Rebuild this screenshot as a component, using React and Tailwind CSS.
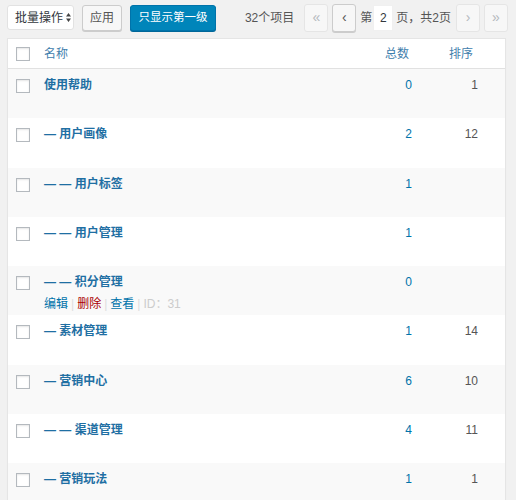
import React from 'react';

const rows = [
  { name: '使用帮助', count: '0', order: '1' },
  { name: '— 用户画像', count: '2', order: '12' },
  { name: '— — 用户标签', count: '1', order: '' },
  { name: '— — 用户管理', count: '1', order: '' },
  { name: '— — 积分管理', count: '0', order: '', actions: true },
  { name: '— 素材管理', count: '1', order: '14' },
  { name: '— 营销中心', count: '6', order: '10' },
  { name: '— — 渠道管理', count: '4', order: '11' },
  { name: '— 营销玩法', count: '1', order: '1' },
];

const Check = () => (
  <span className="block w-[14px] h-[14px] bg-white border border-[#b4b9be] shadow-[inset_0_1px_2px_rgba(0,0,0,0.1)]" />
);

const PageBtn = ({ children, disabled }) => (
  <span
    className={`flex items-center justify-center w-[24px] h-[28px] border rounded-[3px] text-[14px] ${
      disabled
        ? 'border-[#e5e5e5] bg-[#f7f7f7] text-[#b4b9be]'
        : 'border-[#cccccc] bg-[#f7f7f7] text-[#555] shadow-[0_1px_0_#ccc]'
    }`}
  >
    {children}
  </span>
);

export default function App() {
  return (
    <div
      className="min-h-[500px] bg-[#f1f1f1] text-[12px] text-[#555] overflow-hidden"
      style={{ fontFamily: '"Liberation Sans", "Noto Sans CJK SC", sans-serif' }}
    >
      {/* Toolbar */}
      <div className="flex items-center h-[38px] pl-[7px] pr-[8px] pb-[3px] whitespace-nowrap">
        <div className="shrink-0 flex items-center h-[25px] w-[67px] pl-[7px] bg-white border border-[#e2e2e2] rounded-[3px] text-[#32373c] text-[12px]">
          批量操作
          <svg className="ml-[3px]" width="5" height="9" viewBox="0 0 5 9">
            <path d="M2.5 0 L5 3.5 L0 3.5 Z M2.5 9 L5 5.5 L0 5.5 Z" fill="#444" />
          </svg>
        </div>
        <span className="shrink-0 ml-[8px] flex items-center justify-center h-[26px] w-[40px] bg-[#f7f7f7] border border-[#cccccc] rounded-[3px] shadow-[0_1px_0_#ccc] text-[#555] text-[12px]">
          应用
        </span>
        <span className="shrink-0 ml-[8px] flex items-center justify-center h-[26px] w-[86px] bg-[#0085ba] border border-[#0073aa] rounded-[3px] shadow-[0_1px_0_#006799] text-white text-[11.5px]">
          只显示第一级
        </span>
        <div className="ml-auto flex items-center text-[#555]">
          <span className="text-[12px] mr-[10px]">32个项目</span>
          <PageBtn disabled>«</PageBtn>
          <span className="ml-[4px]">
            <PageBtn>‹</PageBtn>
          </span>
          <span className="ml-[4px]">第</span>
          <span className="ml-[1px] flex items-center justify-center w-[20px] h-[26px] bg-white border border-[#f0f0f0] text-[12px] text-[#32373c]">
            2
          </span>
          <span className="ml-[3px]">页，共2页</span>
          <span className="ml-[5px]">
            <PageBtn disabled>›</PageBtn>
          </span>
          <span className="ml-[4px]">
            <PageBtn disabled>»</PageBtn>
          </span>
        </div>
      </div>

      {/* Table */}
      <div className="ml-[7px] w-[499px] bg-white border border-[#e5e5e5] shadow-[0_1px_1px_rgba(0,0,0,0.04)]">
        <div className="flex items-center h-[30px] border-b border-[#e1e1e1] bg-white">
          <div className="w-[36px] pl-[8px]">
            <Check />
          </div>
          <div className="flex-1 text-[#3f80ad]">名称</div>
          <div className="w-[98px] text-right pr-[32px] text-[#3f80ad]">总数</div>
          <div className="w-[64px] text-right pr-[32px] text-[#3f80ad]">排序</div>
        </div>
        {rows.map((r, i) => (
          <div
            key={i}
            className={`flex items-start h-[49.25px] ${i % 2 === 0 ? 'bg-[#f9f9f9]' : 'bg-white'}`}
          >
            <div className="w-[36px] pl-[8px] pt-[10px]">
              <Check />
            </div>
            <div className="flex-1 pt-[7px]">
              <div className="font-bold text-[#1f6fa3] leading-[18px]">{r.name}</div>
              {r.actions && (
                <div className="mt-[6px] leading-[14px] text-[12px]">
                  <span className="text-[#0073aa]">编辑</span>
                  <span className="text-[#ddd] mx-[3px]">|</span>
                  <span className="text-[#a00]">删除</span>
                  <span className="text-[#ddd] mx-[3px]">|</span>
                  <span className="text-[#0073aa]">查看</span>
                  <span className="text-[#ddd] mx-[3px]">|</span>
                  <span className="text-[#ccc]">ID：31</span>
                </div>
              )}
            </div>
            <div className="w-[98px] text-right pr-[29px] pt-[7px] leading-[18px] text-[#0073aa]">{r.count}</div>
            <div className="w-[64px] text-right pr-[27px] pt-[7px] leading-[18px] text-[#555]">{r.order}</div>
          </div>
        ))}
      </div>
    </div>
  );
}
